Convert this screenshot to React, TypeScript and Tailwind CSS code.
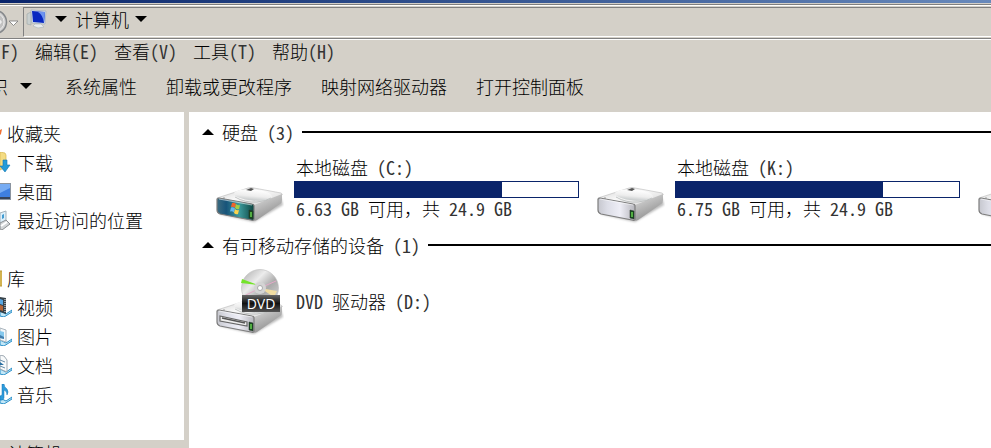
import React, { useId } from 'react';

// Latin runs are half the width of a Chinese character
const Label = ({ text }: { text: string }) => (
    <span className="whitespace-pre">
        {text.split(/([\x20-\x7e]+)/).filter(Boolean).map((part, i) =>
            /^[\x20-\x7e]/.test(part) ? (
                <span key={i} className="font-['Noto_Sans_Mono_CJK_SC','Liberation_Mono',monospace] text-[#333]">{part}</span>
            ) : part
        )}
    </span>
);

const Caret = ({ up = false }: { up?: boolean }) => (
    <svg viewBox="0 0 12 6" className="w-3 h-[6px] shrink-0" aria-hidden="true">
        <path d={up ? 'M0 6 6 0l6 6z' : 'M0 0h12L6 6z'} fill="#000" />
    </svg>
);

const DriveIcon = ({ system = false, dvd = false }: { system?: boolean; dvd?: boolean }) => {
    const id = useId();
    return (
        <svg viewBox="0 0 70 68" className="w-[70px] h-[68px] shrink-0" aria-hidden="true">
            <defs>
                <linearGradient id={`${id}top`} x1="0" y1="0" x2="1" y2="1">
                    <stop offset="0" stopColor="#cfcfcf" />
                    <stop offset=".45" stopColor="#f8f8f8" />
                    <stop offset="1" stopColor="#d2d2d2" />
                </linearGradient>
                <linearGradient id={`${id}side`} x1="0" y1="0" x2=".5" y2="1">
                    <stop offset="0" stopColor="#e4e4e4" />
                    <stop offset="1" stopColor="#8c8c8c" />
                </linearGradient>
                <linearGradient id={`${id}dome`} x1="0" y1="0" x2="0" y2="1">
                    <stop offset="0" stopColor="#fff" />
                    <stop offset=".6" stopColor="#ededed" />
                    <stop offset="1" stopColor="#c4c8c9" />
                </linearGradient>
                <linearGradient id={`${id}front`}>
                    <stop offset="0" stopColor={system ? '#3d6c80' : '#c6c7ce'} />
                    <stop offset=".25" stopColor={system ? '#17547a' : '#dcdde6'} />
                    <stop offset=".6" stopColor={system ? '#3d9a9c' : '#eeeef6'} />
                    <stop offset="1" stopColor={system ? '#0b4440' : '#b5b5bb'} />
                </linearGradient>
                <linearGradient id={`${id}disc`} x1="0" y1="0" x2="1" y2="1">
                    <stop offset="0" stopColor="#a8a8a8" />
                    <stop offset=".35" stopColor="#ececec" />
                    <stop offset=".6" stopColor="#aaa" />
                    <stop offset="1" stopColor="#e0e0e0" />
                </linearGradient>
                <linearGradient id={`${id}plate`} x1="0" y1="0" x2="0" y2="1">
                    <stop offset="0" stopColor="#666" />
                    <stop offset=".5" stopColor="#111" />
                    <stop offset="1" stopColor="#555" />
                </linearGradient>
                <filter id={`${id}soft`}><feGaussianBlur stdDeviation="1.2" /></filter>
            </defs>
            <g transform={dvd ? 'translate(0 1)' : undefined}>
                <path d="M5 58 40 66 69 49 67 42z" fill="#777" opacity=".5" filter={`url(#${id}soft)`} />
                <path d="M3 42 34 32q3-1 6 0l27 5q2 1 1 2L41 50 3 44z" fill={`url(#${id}top)`} stroke="#b9b9b9" strokeWidth=".6" />
                <path d="m40 49 28-11v6q0 3-2 4L43 64q-3 2-4-1z" fill={`url(#${id}side)`} />
                <ellipse cx="39" cy="39" rx="19" ry="5.5" fill={`url(#${id}dome)`} transform="rotate(5 39 39)" />
                <path d="M21 41q10 6 22 5 10-1 14-4" fill="none" stroke="#b4b7b8" strokeWidth=".8" />
                <path d="m32 34 5-2 3 1-3 2z" fill="#555" />
                <circle cx="10" cy="42" r=".7" fill="#888" />
                <path d="M3 44q0-2 2-2l33 6q2 0 2 2v13q0 2-3 1L6 58q-3-1-3-4z" fill={`url(#${id}front)`} stroke="#7d7d7d" strokeWidth="1.2" />
                <path d="m5 43 33 6" stroke="#fff" strokeWidth=".8" opacity=".7" />
                <path d="m35 54 4 1v8l-4-1z" fill="#174a1f" stroke="#252c26" strokeWidth=".5" />
                <path d="M37 56v5" stroke="#7bf25b" strokeWidth="1.2" />
                {system && (
                    <g>
                        <path d="m18 47q2-1 4 1l-1 4q-2-2-4-1z" fill="#f1632c" />
                        <path d="m22 48q2 2 4 1l-1 4q-2 1-4-1z" fill="#a3cf45" />
                        <path d="m17 51.5q2-1 4 1l-1 4q-2-2-4-1z" fill="#62b7ee" />
                        <path d="m21 53q2 2 4 1l-1 4q-2 1-4-1z" fill="#fbd34c" />
                    </g>
                )}
                {dvd && (
                    <g>
                        <path d="m6 48 27 6v4L6 53z" fill="#eee" stroke="#666" strokeWidth="1.2" />
                        <path d="m8 50 23 5" stroke="#555" strokeWidth="1.3" />
                    </g>
                )}
            </g>
            {dvd && (
                <g>
                    <circle cx="46" cy="21" r="18.5" fill={`url(#${id}disc)`} stroke="#bcbcbc" strokeWidth=".6" />
                    <path d="m44 18-16-6-1 4z" fill="#74e32a" />
                    <path d="m46 21 17 3-3 6z" fill="#f1dda2" />
                    <path d="m46 21 16-7M46 21l-16 8" stroke="#e4a9c8" strokeWidth="1" />
                    <circle cx="46" cy="21" r="6" fill="#d4d4d4" />
                    <circle cx="46" cy="21" r="2.5" fill="#fff" stroke="#aaa" />
                    <path d="M28 28h38v17H28z" fill={`url(#${id}plate)`} />
                    <text x="47" y="42" textAnchor="middle" fill="#fff" fontFamily="Open Sans, sans-serif" fontSize="14" fontWeight="400">DVD</text>
                </g>
            )}
        </svg>
    );
};

const LibraryBase = () => (
    <path d="m0 14 6 3 6-4v2l-8 5-4-1z" fill="#c3e7f7" stroke="#278ec8" strokeWidth="1" />
);

// Each glyph fills the 12px that stay in view beside its label
const icons: Record<string, React.ReactNode> = {
    download: (
        <g>
            <path d="M0 0l5 1 1 2v12l-6 3z" fill="#f4dc83" stroke="#d6b44c" strokeWidth=".7" />
            <path d="M3 8h4v5h3l-5 7-5-6h3z" fill="#249bd8" stroke="#1276b1" strokeWidth=".6" />
        </g>
    ),
    desktop: (
        <g>
            <path d="M0 2h11v17H0z" fill="#8b949f" />
            <path d="M0 3h10v13H0z" fill="#3e7fe0" />
            <path d="M0 3h10v4L0 12z" fill="#77acf3" />
            <path d="M0 16h10v2H0z" fill="#36445b" />
        </g>
    ),
    recent: (
        <g>
            <path d="M0 3 6 1v10l-6 4z" fill="#dceffa" stroke="#a6b2ba" />
            <path d="m2 5 2-1v4L2 9z" fill="#419bd1" />
            <path d="m0 13 6-3 4 4-8 6-2-1z" fill="#d3d6d8" stroke="#8a8e91" />
            <path d="m1 16 6-4" stroke="#fff" strokeWidth="2" />
        </g>
    ),
    video: (
        <g>
            <LibraryBase />
            <path d="m0 0 6 1v16l-6-2z" fill="#37424a" />
            <path d="m0 2 3 1v5L0 7z" fill="#59a7e2" />
            <path d="m0 8 3 1v5l-3-1z" fill="#b86637" />
            <path d="M5 2v14" stroke="#eee" strokeWidth="1" strokeDasharray="1 1" />
        </g>
    ),
    picture: (
        <g>
            <LibraryBase />
            <path d="m0 2 6 2v12l-6-2z" fill="#f4f7f9" stroke="#aab5bd" />
            <path d="m0 5 4 1v7l-4-1z" fill="#85c8ed" />
            <path d="m0 9 4 2v2l-4-1z" fill="#427dac" />
        </g>
    ),
    document: (
        <g>
            <LibraryBase />
            <path d="m0 0 4 1 3 4v12l-7-3z" fill="#f8fafb" stroke="#9faab3" />
            <path d="m0 5 5 2M0 11l5 2" stroke="#668ca8" />
            <path d="m0 7 4 3H0z" fill="#286fa3" />
        </g>
    ),
    music: (
        <g>
            <LibraryBase />
            <path d="M2 0h2q0 3 3 5 2 3 0 6 0-4-3-5v8q-1 3-4 2v-4l2-1z" fill="#2e9bdb" stroke="#1776b4" strokeWidth=".5" />
        </g>
    ),
};

const SideItem = ({ label, icon }: { label: string; icon: string }) => (
    <li>
        <a href="#" className="flex h-[29px] items-center gap-[5px]">
            <svg viewBox="0 0 12 20" className="w-3 h-5 shrink-0" aria-hidden="true">{icons[icon]}</svg>
            <Label text={label} />
        </a>
    </li>
);

const SideHeading = ({ label, children }: { label: string; children: React.ReactNode }) => (
    <a href="#" className="flex h-[29px] items-center gap-[5px]">
        <svg viewBox="0 0 2 20" className="w-[2px] h-5 shrink-0" aria-hidden="true">{children}</svg>
        <Label text={label} />
    </a>
);

const GroupHeading = ({ label }: { label: string }) => (
    <h2 className="flex items-center gap-2 pl-[13px] pb-[3px] h-[27px]">
        <Caret up />
        <Label text={label} />
        <span className="h-[2px] grow bg-black" />
    </h2>
);

const Drive = ({ name, detail, used, system }: { name: string; detail: string; used: number; system?: boolean }) => (
    <div className="flex w-[381px] shrink-0">
        <div className="flex h-[68px] w-[80px] shrink-0 items-end">
            <DriveIcon system={system} />
        </div>
        <div className="w-[285px]">
            <div className="h-[25px] leading-[22px] pl-[2px]"><Label text={name} /></div>
            <div className="h-[17px] border border-[#0a246a]" role="meter" aria-label={name} aria-valuenow={used}>
                <div className="h-full bg-[#0a246a]" style={{ width: `${used}%` }} />
            </div>
            <div className="h-5 leading-5 pl-[2px]"><Label text={detail} /></div>
        </div>
    </div>
);

const menus = ['文件(F)', '编辑(E)', '查看(V)', '工具(T)', '帮助(H)'];
const commands = ['系统属性', '卸载或更改程序', '映射网络驱动器', '打开控制面板'];

export default function App() {
    return (
        <div className="flex h-screen flex-col overflow-hidden bg-[#d4d0c8] font-['Noto_Sans_CJK_SC',sans-serif] text-[18px] font-light leading-[22px] text-black">
            <div className="h-[3px] shrink-0 bg-linear-to-r from-[#0a246a] to-[#6889bb]" />
            <header className="shrink-0">
                <div className="mt-px h-[2px] border-t border-t-[#808080] border-b border-b-white" />
                <div className="mt-px flex h-[30px] items-stretch">
                    <div className="flex w-[23px] shrink-0 items-center">
                        <svg viewBox="0 0 20 30" className="w-5 h-[30px]" aria-hidden="true">
                            <circle cx="-5" cy="15" r="11.5" fill="#cfcfcf" stroke="#85888b" strokeWidth="1.5" />
                            <circle cx="-5" cy="15" r="9" fill="#c1c1c1" stroke="#e8e8e8" />
                            <path d="m-2 10 4 5-4 5z" fill="#eee" />
                            <path d="M9 14h9l-4.500 4.500z" fill="#fff" stroke="#777" strokeWidth=".8" />
                        </svg>
                    </div>
                    <div className="flex grow items-center border-t border-l border-[#808080] border-b border-b-white pb-[6px] pl-[2px]">
                        <svg viewBox="0 0 21 20" className="w-[21px] h-5" aria-hidden="true">
                            <path d="M1 5 5 3v13l-4-1z" fill="#c8cfcf" stroke="#9ca6a6" strokeWidth=".6" />
                            <path d="m5 1 15 1-1 13-13-1z" fill="#d9e2ed" stroke="#98a8b8" strokeWidth=".6" />
                            <path d="m6 2 13 1-1 11-11-1z" fill="#0928c0" />
                            <path d="m12 3 7 0-1 11q-1-8-6-11z" fill="#6d93ee" />
                            <path d="m9 15 6 0 3 3-6 1-5-2z" fill="#e8eced" stroke="#a8b1b5" strokeWidth=".6" />
                        </svg>
                        <button aria-label="位置" className="ml-2"><Caret /></button>
                        <button className="ml-2 flex items-center gap-[6px]"><Label text="计算机" /><Caret /></button>
                    </div>
                </div>
                <div className="mt-px h-[2px] border-t border-t-[#808080] border-b border-b-white" />
                <nav className="-ml-[44px] flex h-[25px] items-center gap-4 pb-1">
                    {menus.map((m) => <button key={m} className="shrink-0"><Label text={m} /></button>)}
                </nav>
                <div className="-ml-[28px] flex h-[47px] items-center gap-[29px] pb-[5px]">
                    <button className="flex shrink-0 items-center gap-3 pr-[4px]"><Label text="组织" /><Caret /></button>
                    {commands.map((c) => <button key={c} className="shrink-0"><Label text={c} /></button>)}
                </div>
            </header>
            <div className="flex min-h-0 grow">
                <aside className="flex w-[184px] shrink-0 flex-col">
                    <div className="min-h-0 grow bg-white pt-[6px]">
                        <SideHeading label="收藏夹"><path d="m0 7 2-1-1 5-1 1z" fill="#ef7134" /></SideHeading>
                        <ul>
                            <SideItem label="下载" icon="download" />
                            <SideItem label="桌面" icon="desktop" />
                            <SideItem label="最近访问的位置" icon="recent" />
                        </ul>
                        <div className="h-[29px]" />
                        <SideHeading label="库"><path d="M0 3h2v15H0z" fill="#edce68" stroke="#b99938" /></SideHeading>
                        <ul>
                            <SideItem label="视频" icon="video" />
                            <SideItem label="图片" icon="picture" />
                            <SideItem label="文档" icon="document" />
                            <SideItem label="音乐" icon="music" />
                        </ul>
                    </div>
                    <div className="h-2 shrink-0 overflow-hidden pl-2 pt-[2px]"><Label text="计算机" /></div>
                </aside>
                <main className="ml-[5px] min-w-0 grow overflow-hidden bg-white pt-2">
                    <GroupHeading label="硬盘 (3)" />
                    <div className="flex overflow-hidden pt-[9px] pl-[25px]">
                        <Drive name="本地磁盘 (C:)" detail="6.63 GB 可用，共 24.9 GB" used={73} system />
                        <Drive name="本地磁盘 (K:)" detail="6.75 GB 可用，共 24.9 GB" used={73} />
                        <Drive name="本地磁盘" detail="" used={0} />
                    </div>
                    <div className="pt-[9px]">
                        <GroupHeading label="有可移动存储的设备 (1)" />
                    </div>
                    <div className="flex items-center gap-[12px] pt-[7px] pl-[25px]">
                        <DriveIcon dvd />
                        <Label text="DVD 驱动器 (D:)" />
                    </div>
                </main>
            </div>
        </div>
    );
}
